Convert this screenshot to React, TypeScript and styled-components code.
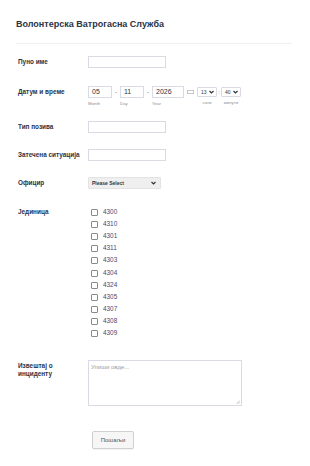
import React from 'react';
import styled, {createGlobalStyle} from 'styled-components';

const GlobalStyle = createGlobalStyle`
    html, body {
        margin: 0;
        padding: 0;
        background: #fff;
    }
    body {
        font-family: "Liberation Sans", Arial, sans-serif;
        color: #2c3345;
    }
`;

const Page = styled.div`
    width: 310px;
    min-height: 466px;
    padding: 0 18px 0 16px;
    box-sizing: border-box;
`;

const Header = styled.div`
    padding: 19px 0 13px;
    border-bottom: 1px solid #f1f1f3;
`;

const Title = styled.h1`
    margin: 0;
    font-size: 9px;
    line-height: 11px;
    font-weight: bold;
    color: #2c3345;
`;

const Fields = styled.div`
    padding-top: 12px;
`;

const Row = styled.div<{ $space: number }>`
    display: flex;
    align-items: flex-start;
    margin-bottom: ${p => p.$space}px;
    padding-left: 2px;
`;

const Label = styled.div`
    width: 70px;
    flex-shrink: 0;
    font-size: 6.4px;
    line-height: 7.5px;
    font-weight: bold;
    color: #2c3345;
    padding-top: 2px;
`;

const TextInput = styled.div`
    width: 78px;
    height: 12px;
    border: 1px solid #d8dbe3;
    box-sizing: border-box;
    background: #fff;
`;

const DateRow = styled.div`
    display: flex;
    align-items: flex-start;
`;

const DateCell = styled.div`
    display: flex;
    flex-direction: column;
    align-items: flex-start;
`;

const DateBox = styled.div<{ $w: number }>`
    width: ${p => p.$w}px;
    height: 12px;
    border: 1px solid #d8dbe3;
    box-sizing: border-box;
    font-size: 7px;
    line-height: 10px;
    padding-left: 3px;
    color: #2c3345;
`;

const SubLabel = styled.div<{ $center?: boolean }>`
    font-size: 4.4px;
    color: #8d8f95;
    margin-top: 3px;
    align-self: ${p => (p.$center ? 'center' : 'flex-start')};
`;

const Sep = styled.span<{ $w?: number }>`
    font-size: 6px;
    line-height: 12px;
    color: #555;
    width: ${p => p.$w ?? 8}px;
    text-align: center;
`;

const Cal = styled.span`
    display: flex;
    align-items: center;
    height: 12px;
    margin: 0 3px 0 3px;
`;

const MiniSelect = styled.div<{ $w: number }>`
    width: ${p => p.$w}px;
    height: 10px;
    margin-top: 1px;
    border: 1px solid #d8dbe3;
    box-sizing: border-box;
    border-radius: 1px;
    display: flex;
    align-items: center;
    justify-content: space-between;
    padding: 0 2px 0 3px;
    font-size: 5px;
    color: #2c3345;
`;

const BigSelect = styled.div`
    width: 73px;
    height: 12px;
    border: 1px solid #e3e3e3;
    box-sizing: border-box;
    background: #efefef;
    border-radius: 1px;
    display: flex;
    align-items: center;
    justify-content: space-between;
    padding: 0 4px 0 3px;
    font-size: 5px;
    font-weight: bold;
    color: #333;
`;

const CheckList = styled.div`
    display: flex;
    flex-direction: column;
    padding-left: 3px;
    margin-top: -1px;
`;

const CheckItem = styled.label`
    display: flex;
    align-items: center;
    height: 12.2px;
    font-size: 6.4px;
    color: #3f4a73;
`;

const Box = styled.span`
    width: 5px;
    height: 5px;
    border: 0.8px solid #8a8a8a;
    border-radius: 1px;
    margin-right: 5px;
    margin-top: 2px;
    background: #fff;
`;

const TextArea = styled.div`
    position: relative;
    width: 154px;
    height: 46px;
    border: 1px solid #d8dbe3;
    box-sizing: border-box;
    padding: 3px 2px;
    font-size: 6px;
    color: #9a9ca2;
`;

const Grip = styled.svg`
    position: absolute;
    right: 1px;
    bottom: 1px;
`;

const SubmitRow = styled.div`
    padding-left: 76px;
    margin-top: 22px;
`;

const Button = styled.button`
    width: 42px;
    height: 18px;
    border: 1px solid #d0d0d0;
    border-radius: 2px;
    background: #f6f6f6;
    font-family: "Liberation Sans", Arial, sans-serif;
    font-size: 6px;
    color: #555;
    padding: 0;
    box-shadow: 0 1px 1px rgba(0, 0, 0, 0.05);
`;

const Chevron = () => (
    <svg width="5" height="4" viewBox="0 0 10 8">
        <path d="M1 2 L5 6 L9 2" stroke="#333" strokeWidth="2.4" fill="none"/>
    </svg>
);

const units = ['4300', '4310', '4301', '4311', '4303', '4304', '4324', '4305', '4307', '4308', '4309'];

const App: React.FC = () => {
    return (
        <Page>
            <GlobalStyle/>
            <Header>
                <Title>Волонтерска Ватрогасна Служба</Title>
            </Header>
            <Fields>
                <Row $space={18}>
                    <Label>Пуно име</Label>
                    <TextInput/>
                </Row>
                <Row $space={15}>
                    <Label>Датум и време</Label>
                    <DateRow>
                        <DateCell>
                            <DateBox $w={24}>05</DateBox>
                            <SubLabel>Month</SubLabel>
                        </DateCell>
                        <Sep>-</Sep>
                        <DateCell>
                            <DateBox $w={24}>11</DateBox>
                            <SubLabel>Day</SubLabel>
                        </DateCell>
                        <Sep>-</Sep>
                        <DateCell>
                            <DateBox $w={32}>2026</DateBox>
                            <SubLabel>Year</SubLabel>
                        </DateCell>
                        <Cal>
                            <svg width="7" height="4" viewBox="0 0 7 4">
                                <rect x="0.4" y="0.4" width="6.2" height="3.2" fill="none" stroke="#b9bcc4" strokeWidth="0.8"/>
                            </svg>
                        </Cal>
                        <DateCell>
                            <MiniSelect $w={20}>13 <Chevron/></MiniSelect>
                            <SubLabel $center>сати</SubLabel>
                        </DateCell>
                        <Sep $w={4}>:</Sep>
                        <DateCell>
                            <MiniSelect $w={20}>40 <Chevron/></MiniSelect>
                            <SubLabel $center>минути</SubLabel>
                        </DateCell>
                    </DateRow>
                </Row>
                <Row $space={16}>
                    <Label>Тип позива</Label>
                    <TextInput/>
                </Row>
                <Row $space={16}>
                    <Label>Затечена ситуација</Label>
                    <TextInput/>
                </Row>
                <Row $space={17}>
                    <Label>Официр</Label>
                    <BigSelect>Please Select <Chevron/></BigSelect>
                </Row>
                <Row $space={21}>
                    <Label>Јединица</Label>
                    <CheckList>
                        {units.map(u => (
                            <CheckItem key={u}>
                                <Box/>
                                {u}
                            </CheckItem>
                        ))}
                    </CheckList>
                </Row>
                <Row $space={0}>
                    <Label>Извештај о инциденту</Label>
                    <TextArea>
                        Упиши овде...
                        <Grip width="4" height="4" viewBox="0 0 4 4">
                            <path d="M0.5 3.8 L3.8 0.5 M2 3.8 L3.8 2" stroke="#999" strokeWidth="0.5"/>
                        </Grip>
                    </TextArea>
                </Row>
            </Fields>
            <SubmitRow>
                <Button>Пошаљи</Button>
            </SubmitRow>
        </Page>
    );
};

export default App;
